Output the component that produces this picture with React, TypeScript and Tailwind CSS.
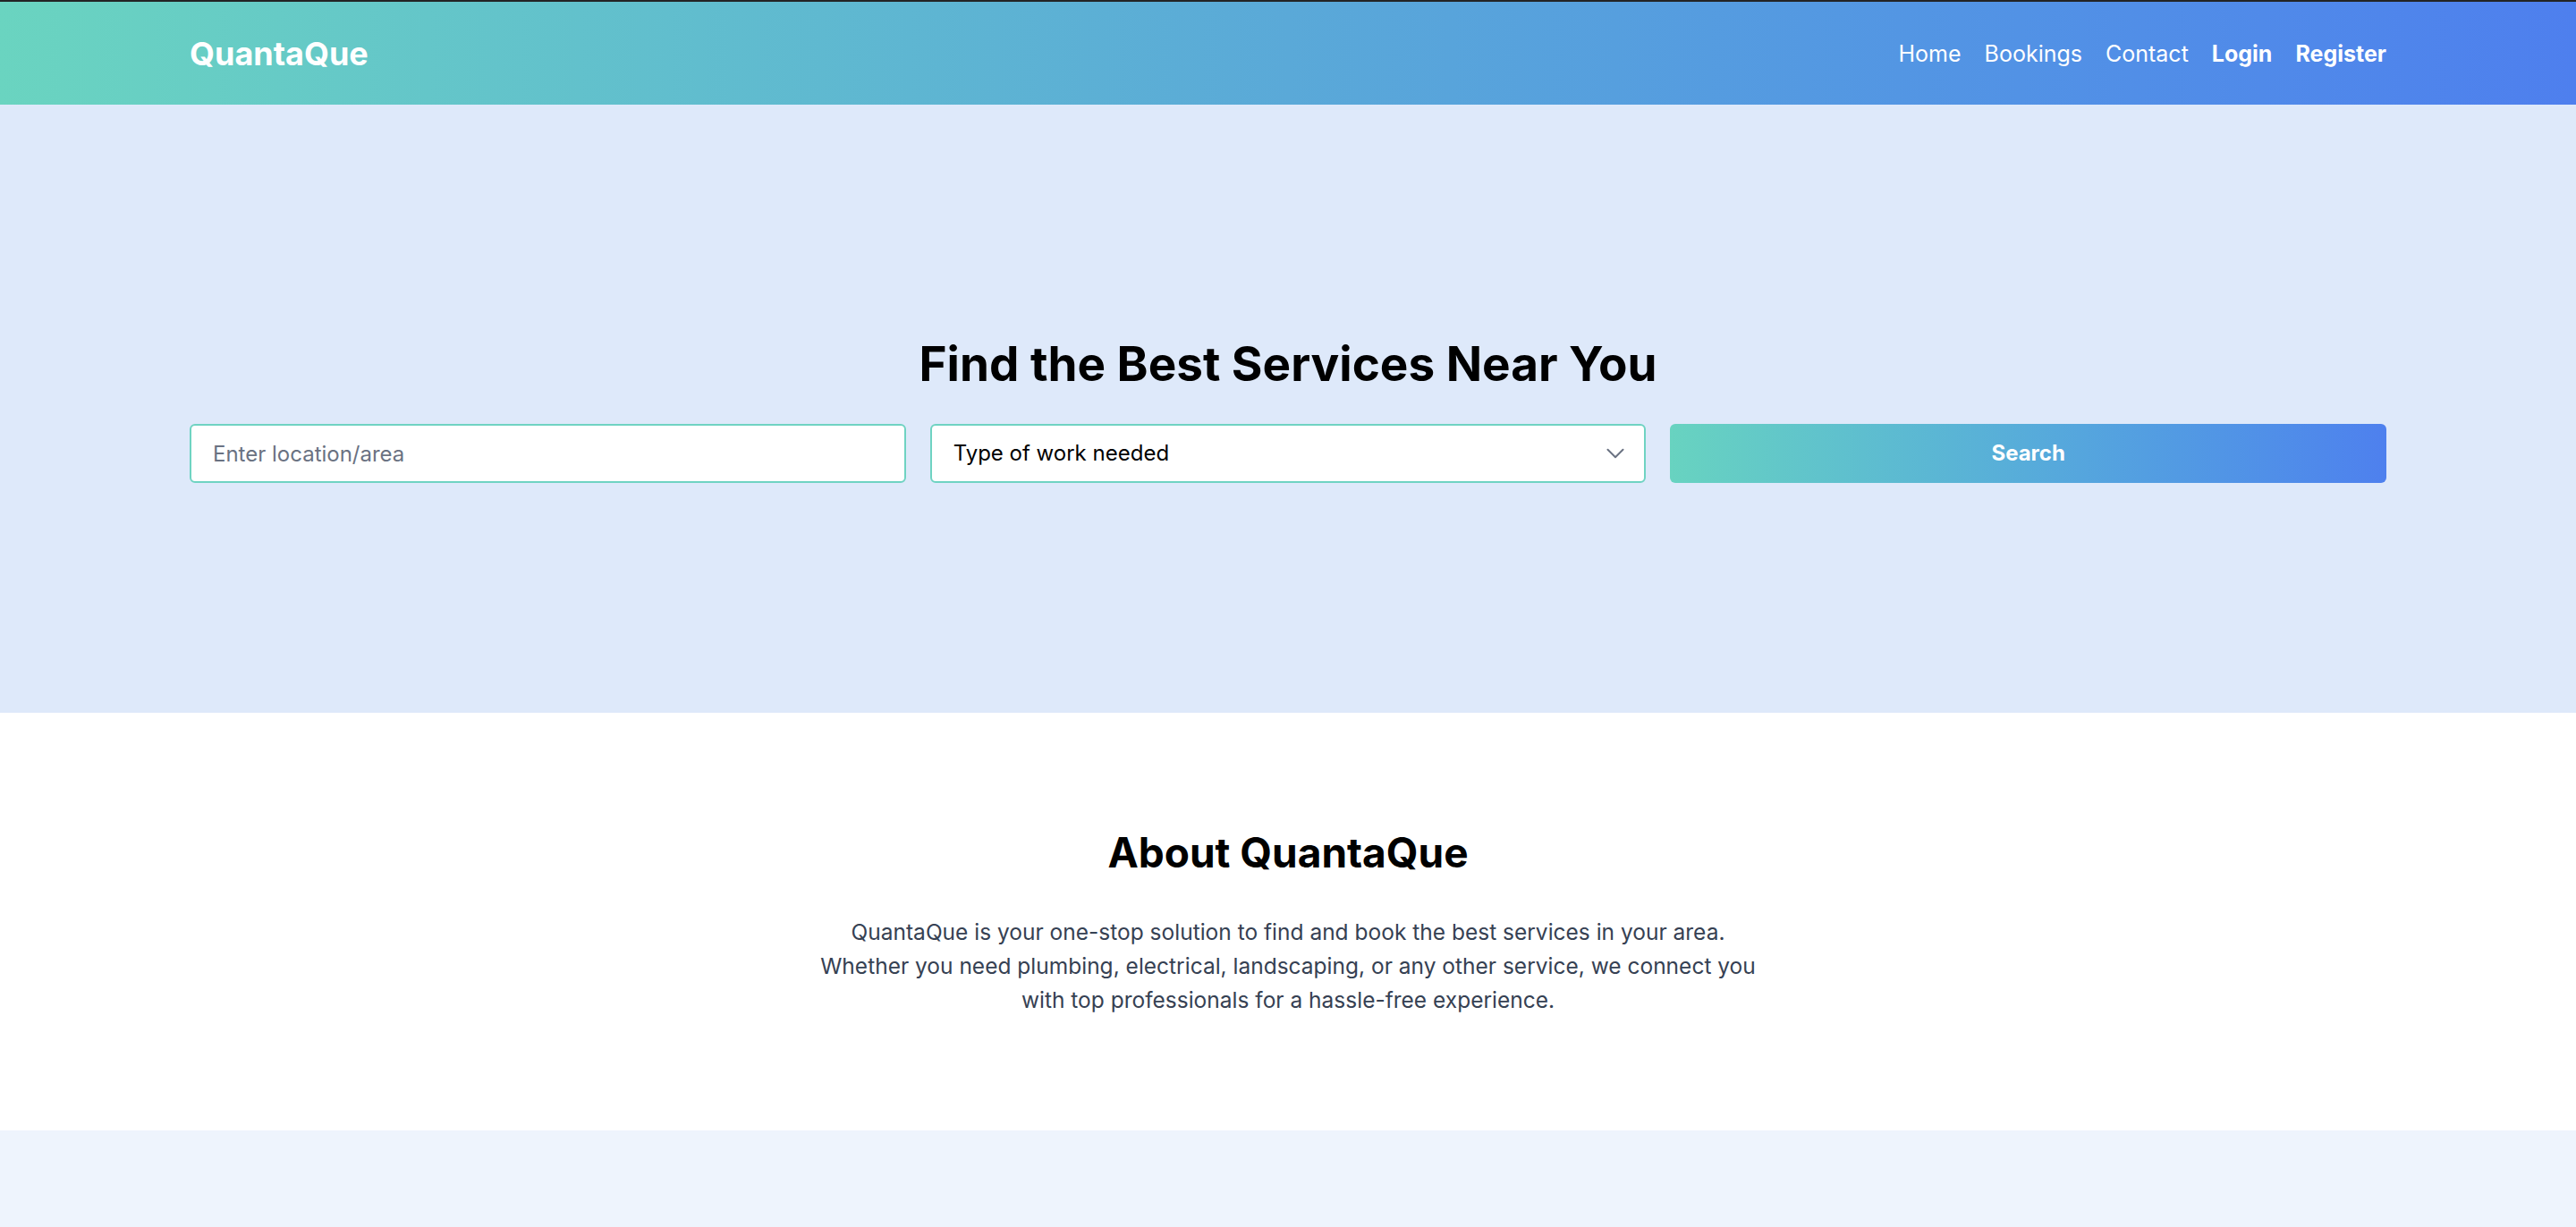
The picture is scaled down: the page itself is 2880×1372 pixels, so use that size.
import { ChevronDown } from "lucide-react";

const navLinks = [
  { label: "Home", bold: false },
  { label: "Bookings", bold: false },
  { label: "Contact", bold: false },
  { label: "Login", bold: true },
  { label: "Register", bold: true },
];

const Header = () => (
  <header className="border-t-2 border-[#232425] bg-gradient-to-r from-[#6ad4c0] via-[#5aa9d8] to-[#4e7fee] text-white">
    <div className="mx-auto flex h-[115px] w-[2456px] items-center justify-between">
      <a href="#" className="text-[36px] font-bold">QuantaQue</a>
      <nav className="flex items-center gap-[26px] pt-[2px] text-[25px]">
        {navLinks.map((link) => (
          <a key={link.label} href="#" className={link.bold ? "font-bold" : ""}>
            {link.label}
          </a>
        ))}
      </nav>
    </div>
  </header>
);

const Hero = () => (
  <section className="flex h-[680px] items-center bg-[#dee9fa]">
    <div className="mx-auto w-[2456px]">
      <h1 className="mb-[34px] text-center text-[53px] font-bold leading-[66px] text-black">
        Find the Best Services Near You
      </h1>
      <div className="grid grid-cols-3 gap-[27px]">
        <input
          type="text"
          placeholder="Enter location/area"
          className="h-[66px] rounded-[6px] border-2 border-[#6fd3c2] bg-white px-[24px] text-[24px] text-black placeholder:text-gray-500 focus:outline-none"
        />
        <div className="relative">
          <select className="h-[66px] w-full appearance-none rounded-[6px] border-2 border-[#6fd3c2] bg-white px-[24px] text-[24px] text-black focus:outline-none">
            <option>Type of work needed</option>
            <option>Plumbing</option>
            <option>Electrical</option>
            <option>Landscaping</option>
          </select>
          <ChevronDown className="pointer-events-none absolute right-[17px] top-1/2 h-[34px] w-[34px] -translate-y-1/2 text-gray-500" strokeWidth={1.4} />
        </div>
        <button className="h-[66px] rounded-[6px] bg-gradient-to-r from-[#68d3c0] to-[#4e80ee] text-[24px] font-bold text-white">
          Search
        </button>
      </div>
    </div>
  </section>
);

const About = () => (
  <section className="flex h-[467px] flex-col items-center bg-white pt-[128px]">
    <h2 className="text-[46px] font-bold leading-[56px] text-black">About QuantaQue</h2>
    <p className="mt-[42px] max-w-[1060px] text-center text-[24.5px] leading-[38px] text-gray-700">
      QuantaQue is your one-stop solution to find and book the best services in your area.
      Whether you need plumbing, electrical, landscaping, or any other service, we connect you
      with top professionals for a hassle-free experience.
    </p>
  </section>
);

export default function App() {
  return (
    <div className="min-h-screen bg-[#eef4fd] font-['Inter',sans-serif]">
      <Header />
      <Hero />
      <About />
      <section className="h-[108px] bg-[#eef4fd]" />
    </div>
  );
}
